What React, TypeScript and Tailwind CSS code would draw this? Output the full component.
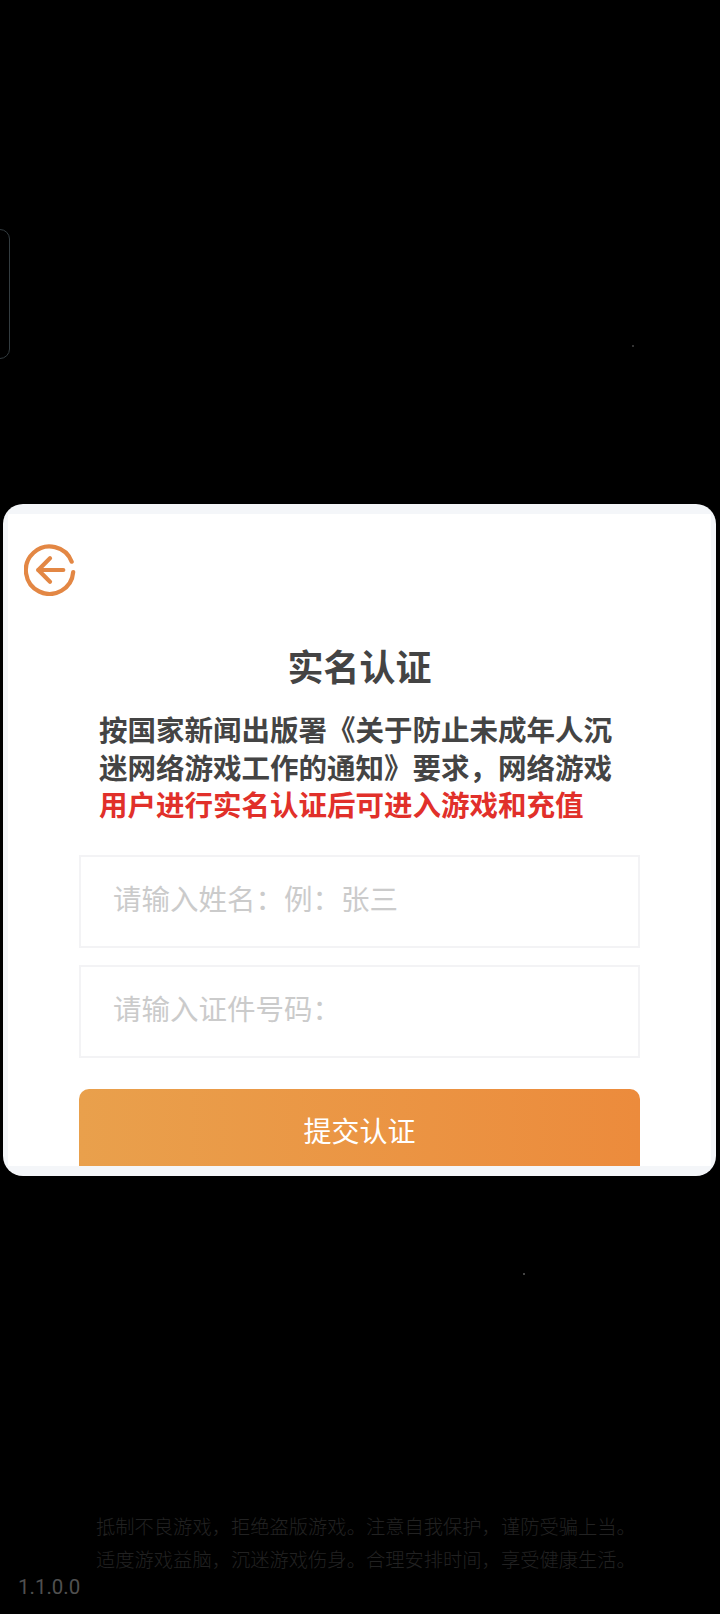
const CJK = 'font-["Roboto","Noto_Sans_CJK_SC",sans-serif]';

function BackIcon() {
  return (
    <svg width="52" height="52" viewBox="0 0 52 52" fill="none" stroke="#e38744" strokeWidth="4.2" strokeLinecap="round" strokeLinejoin="round">
      <path d="M47.7 17.7A23.7 23.7 0 1 0 49.2 28" />
      <path d="M39.3 26H14.3" />
      <path d="M26 14.3 14.3 26 26 37.7" />
    </svg>
  );
}

export default function App() {
  return (
    <main className={`relative h-[1614px] w-[720px] overflow-hidden bg-black ${CJK}`}>
      {/* side handle */}
      <div className="absolute left-[-20px] top-[229px] h-[130px] w-[30px] rounded-[10px] border-[1.5px] border-[#333c40]" />
      <div className="absolute left-[632px] top-[345px] h-[2px] w-[2px] bg-[#333]" />
      <div className="absolute left-[523px] top-[1273px] h-[2px] w-[2px] bg-[#444]" />

      <div className="h-[504px]" />
      <section className="ml-[3px] mr-[4px] flex h-[672px] flex-col overflow-hidden rounded-[20px] bg-[#f4f6f9] px-[5px] py-[10px]">
        <div className="flex h-full flex-col overflow-hidden bg-white">
          <div className="pl-[16px] pt-[30px]">
            <BackIcon />
          </div>
          <h1 className="mt-[48px] text-center text-[36px] font-bold leading-[50px] text-[#444]">实名认证</h1>
          <p className="mt-[19px] pl-[91px] pr-[96px] text-[28.5px] font-bold leading-[37.5px] text-[#444]">
            按国家新闻出版署《关于防止未成年人沉迷网络游戏工作的通知》要求，网络游戏
            <span className="text-[#e1302a]">用户进行实名认证后可进入游戏和充值</span>
          </p>
          <div className="mx-[71px] mt-[29px] flex h-[93px] items-center border-2 border-[#f3f3f5] px-[32px] text-[28.5px] text-[#cbcbcb]">
            请输入姓名：例：张三
          </div>
          <div className="mx-[71px] mt-[17px] flex h-[93px] items-center border-2 border-[#f3f3f5] px-[32px] text-[28.5px] text-[#cbcbcb]">
            请输入证件号码：
          </div>
          <button className="mx-[71px] mt-[31px] h-[77px] shrink-0 rounded-t-[10px] bg-gradient-to-r from-[#e9a04c] to-[#ec8b3c] pt-[12px] text-[28px] text-white">
            提交认证
          </button>
        </div>
      </section>

      <div className="mt-[335px] pl-[96px] text-[19.3px] font-light leading-[33px] text-[#222]">
        <p>抵制不良游戏，拒绝盗版游戏。注意自我保护，谨防受骗上当。</p>
        <p>适度游戏益脑，沉迷游戏伤身。合理安排时间，享受健康生活。</p>
      </div>
      <div className="absolute left-[18px] top-[1573px] text-[20.5px] leading-[28px] text-[#505050]">1.1.0.0</div>
    </main>
  );
}
